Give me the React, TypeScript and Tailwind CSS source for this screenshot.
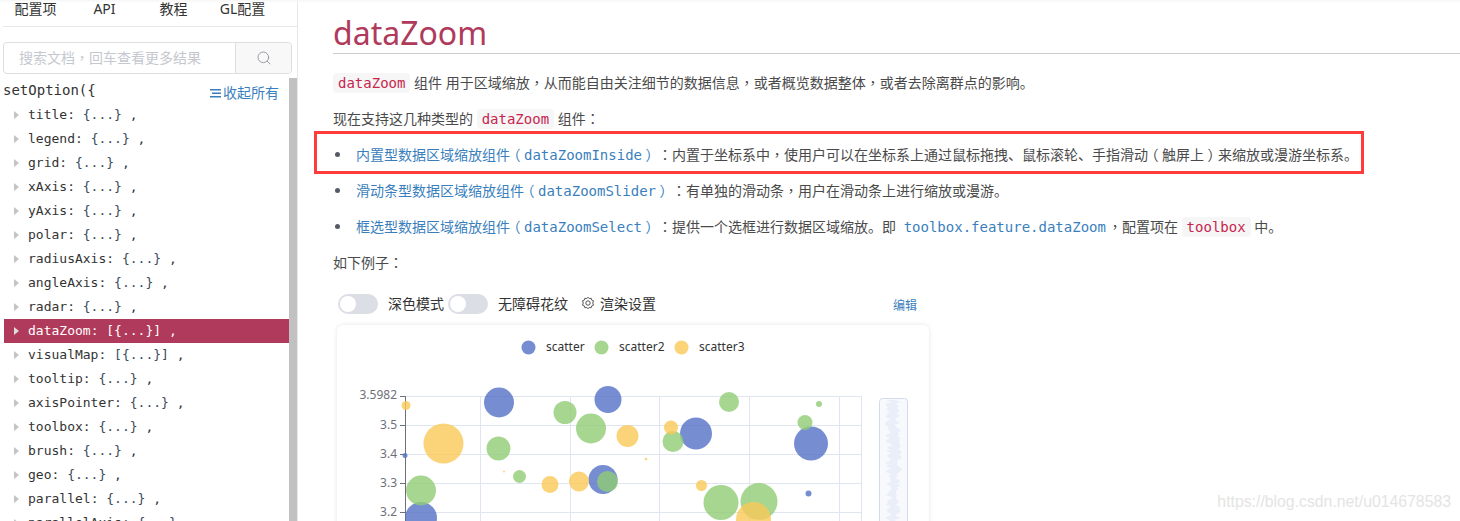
import React from "react";
import { Search } from "lucide-react";

const cjk = "font-['Noto_Sans','Noto_Sans_CJK_SC',sans-serif]";
const mono = "font-['DejaVu_Sans_Mono','Noto_Sans_CJK_SC',monospace]";

const rows: [string, string][] = [
  ["title", "{...}"],
  ["legend", "{...}"],
  ["grid", "{...}"],
  ["xAxis", "{...}"],
  ["yAxis", "{...}"],
  ["polar", "{...}"],
  ["radiusAxis", "{...}"],
  ["angleAxis", "{...}"],
  ["radar", "{...}"],
  ["dataZoom", "[{...}]"],
  ["visualMap", "[{...}]"],
  ["tooltip", "{...}"],
  ["axisPointer", "{...}"],
  ["toolbox", "{...}"],
  ["brush", "{...}"],
  ["geo", "{...}"],
  ["parallel", "{...}"],
  ["parallelAxis", "{...}"],
];

// Full-width punctuation sits centred in its box in the reference.
function Zh({ t }: { t: string }) {
  return (
    <>
      {t.split(/([，：（）])/).map((s, i) => {
        if (s === "，" || s === "：")
          return <span key={i} className="font-['Noto_Sans_CJK_TC']">{s}</span>;
        if (s === "（" || s === "）")
          return <span key={i} className="px-[3.5px] [font-feature-settings:'halt']">{s}</span>;
        return <React.Fragment key={i}>{s}</React.Fragment>;
      })}
    </>
  );
}

function Code({ children }: { children: React.ReactNode }) {
  return (
    <code className={`${mono} rounded-[4px] bg-[#f6f6f6] px-[5px] py-[2px] text-[14px] text-[#c7254e]`}>{children}</code>
  );
}

function M({ children }: { children: React.ReactNode }) {
  return <span className={`${mono} text-[14px]`}>{children}</span>;
}

function Item({ children }: { children: React.ReactNode }) {
  return (
    <li className="relative flex h-[36px] items-center pl-[23px]">
      <span className="absolute left-[2px] top-[15px] size-[5px] rounded-full bg-[#555b66]" />
      <span>{children}</span>
    </li>
  );
}

function Switch() {
  return (
    <span className="flex h-[20px] w-[40px] items-center rounded-full bg-[#dcdee6] pl-[2px]">
      <span className="size-[16px] rounded-full bg-white" />
    </span>
  );
}

type C = [number, number, number];
const blue: C[] = [[499, 402.5, 15], [608, 399.5, 13.5], [696, 433.5, 16], [811, 443.5, 17], [603, 479.5, 14.5], [421, 518, 16], [405, 455.5, 2.5], [808.5, 493.5, 3]];
const green: C[] = [[565, 412.5, 11.5], [591, 428.5, 15], [498.5, 448.5, 12], [673, 441.5, 10.5], [729, 402, 10], [805, 422.5, 7.5], [819, 404, 3], [519.5, 476.5, 6.5], [607.5, 481.5, 10.5], [421, 490.5, 15], [721, 502.5, 17.5], [759, 501.5, 18.5]];
const yellow: C[] = [[406, 405.5, 4.5], [443.5, 443.5, 20], [627.5, 436, 11], [671, 427.5, 7], [550, 484.5, 8.5], [579, 481.5, 10], [701.5, 485.5, 5.5], [753.5, 519.5, 17.5], [646, 459, 1.3], [504, 471.5, 1]];

const sliderPath = (() => {
  const right: string[] = [];
  const left: string[] = [];
  const n = (i: number) => Math.abs(Math.sin(i * 12.9898) * 43758.5453) % 1;
  for (let i = 0; i <= 66; i++) {
    const y = 400 + i * 1.9;
    right.push(`${(893 + 2 + n(i) * 7).toFixed(1)},${y.toFixed(1)}`);
    left.unshift(`${(893 - 1 - n(i + 100) * 7).toFixed(1)},${y.toFixed(1)}`);
  }
  return "M" + right.concat(left).join(" L") + " Z";
})();

function Chart() {
  const xs = [480.5, 570.5, 659.5, 749.5, 839.5, 861.5];
  const ys: [number, string][] = [[396.5, "3.5982"], [425.5, "3.5"], [454.5, "3.4"], [483.5, "3.3"], [512.5, "3.2"]];
  const labelFont = "'Noto Sans','Liberation Sans',sans-serif";
  return (
    <svg width="592" height="196" viewBox="337 325 592 196" className="block" fontFamily={labelFont}>
      {xs.map((x) => (
        <line key={x} x1={x} x2={x} y1={396} y2={521} stroke="#e0e6f1" />
      ))}
      {ys.map(([y]) => (
        <line key={y} x1={405} x2={862} y1={y} y2={y} stroke="#e0e6f1" />
      ))}
      <line x1={405.5} x2={405.5} y1={396} y2={521} stroke="#6e7079" />
      {ys.map(([y, t], i) => (
        <g key={t}>
          <line x1={400} x2={405} y1={y} y2={y} stroke="#6e7079" />
          <text x={397} y={y + (i === 0 ? 2 : 3)} textAnchor="end" fontSize="12" fill="#6e7079">{t}</text>
        </g>
      ))}
      {blue.map(([x, y, r], i) => <circle key={i} cx={x} cy={y} r={r} fill="#5470c6" fillOpacity={0.8} />)}
      {green.map(([x, y, r], i) => <circle key={i} cx={x} cy={y} r={r} fill="#91cc75" fillOpacity={0.8} />)}
      {yellow.map(([x, y, r], i) => <circle key={i} cx={x} cy={y} r={r} fill="#fac858" fillOpacity={0.8} />)}
      <circle cx={528.5} cy={347.5} r={7} fill="#5470c6" fillOpacity={0.8} />
      <text x={546} y={351} fontSize="12" fill="#333">scatter</text>
      <circle cx={601.5} cy={347.5} r={7} fill="#91cc75" fillOpacity={0.8} />
      <text x={619} y={351} fontSize="12" fill="#333">scatter2</text>
      <circle cx={681.5} cy={347.5} r={7} fill="#fac858" fillOpacity={0.8} />
      <text x={699} y={351} fontSize="12" fill="#333">scatter3</text>
      <rect x={879.5} y={398.5} width={28} height={130} rx={3} fill="#f7f9fc" stroke="#d2dbee" />
      <path d={sliderPath} fill="#e9eef9" />
    </svg>
  );
}

export default function App() {
  return (
    <div className={`${cjk} relative flex h-[521px] w-[1460px] overflow-hidden bg-white text-[14px] text-[#4a4a4a] [text-spacing-trim:space-all]`}>
      <aside className="flex h-full w-[298px] shrink-0 flex-col border-r border-[#e8e8e8]">
        <nav className="ml-[3px] flex h-[27px] shrink-0 border-b border-[#e8e8e8] text-[14px] leading-[18px] text-[#333]">
          <span className="ml-[-2px] w-[69px] text-center">配置项</span>
          <span className="w-[69px] text-center">API</span>
          <span className="w-[69px] text-center">教程</span>
          <span className="w-[69px] text-center">GL配置</span>
        </nav>
        <div className="ml-[3px] mr-[5px] mt-[15px] flex h-[32px] shrink-0 rounded-[4px] border border-[#dcdee2]">
          <div className="flex flex-1 items-center pb-[2px] pl-[15px] text-[#c5c8ce]"><span><Zh t="搜索文档，回车查看更多结果" /></span></div>
          <div className="flex w-[56px] items-center justify-center rounded-r-[4px] border-l border-[#dcdee2] bg-[#f8f8f9]">
            <Search size={16} color="#9a9da5" strokeWidth={1.5} />
          </div>
        </div>
        <div className="mt-[4px] flex min-h-0 flex-1">
          <div className="min-w-0 flex-1 overflow-hidden">
            <div className="flex h-[25px] items-start justify-between pl-[3px] pr-[10px] pt-[4px]">
              <span className={`${mono} text-[14px] leading-[17px] text-[#333]`}>{"setOption({"}</span>
              <span className="mt-[3px] flex items-center gap-[2px] text-[14px] leading-[16px] text-[#3a7fbd]">
                <svg width="11" height="9" viewBox="0 0 11 9" fill="#3a7fbd">
                  <rect x="0" y="0" width="11" height="1.5" />
                  <rect x="2" y="3.5" width="9" height="1.5" />
                  <rect x="0" y="7" width="11" height="1.5" />
                </svg>
                收起所有
              </span>
            </div>
            <ul className={`${mono} ml-[4px] text-[13px]`}>
              {rows.map(([k, v]) => {
                const on = k === "dataZoom";
                return (
                  <li key={k} className={`flex h-[24px] items-center pl-[10px] ${on ? "bg-[#b03a5b] text-white" : "text-[#333]"}`}>
                    <svg width="14" height="8" viewBox="0 0 14 8" className="shrink-0">
                      <path d="M0 0 L5 4 L0 8 Z" fill={on ? "#ddd" : "#c4c4c4"} />
                    </svg>
                    <span className="whitespace-pre">
                      {k}: <span className={on ? "" : "text-[#3a4a5a]"}>{v}</span> ,
                    </span>
                  </li>
                );
              })}
            </ul>
          </div>
          <div className="w-[8px] shrink-0 bg-[#c1c1c1]" />
        </div>
      </aside>

      <main className="min-w-0 flex-1 pl-[35px]">
        <h2 className="h-[54px] border-b border-[#cccccc] pt-[11px] font-['Noto_Sans'] text-[32px] leading-[44px] text-[#b03a5b]">dataZoom</h2>
        <p className="mt-[11px] flex h-[36px] items-center">
          <span><Code>dataZoom</Code> <Zh t="组件 用于区域缩放，从而能自由关注细节的数据信息，或者概览数据整体，或者去除离群点的影响。" /></span>
        </p>
        <p className="flex h-[36px] items-center">
          <span>现在支持这几种类型的 <Code>dataZoom</Code> <Zh t="组件：" /></span>
        </p>
        <ul>
          <Item>
            <span className="mr-[2px] text-[#3a7fbd]"><Zh t="内置型数据区域缩放组件（" /><M>dataZoomInside</M><Zh t="）" /></span><Zh t="：内置于坐标系中，使用户可以在坐标系上通过鼠标拖拽、鼠标滚轮、手指滑动（触屏上）来缩放或漫游坐标系。" />
            <span className="absolute left-[-19px] top-[-6px] h-[43px] w-[1050px] border-[3px] border-[#ff3b3b]" />
          </Item>
          <Item>
            <span className="mr-[2px] text-[#3a7fbd]"><Zh t="滑动条型数据区域缩放组件（" /><M>dataZoomSlider</M><Zh t="）" /></span><Zh t="：有单独的滑动条，用户在滑动条上进行缩放或漫游。" />
          </Item>
          <Item>
            <span className="mr-[2px] text-[#3a7fbd]"><Zh t="框选型数据区域缩放组件（" /><M>dataZoomSelect</M><Zh t="）" /></span><Zh t="：提供一个选框进行数据区域缩放。即 " /><span className="pl-[4px] pr-[2px] text-[#3a7fbd]"><M>toolbox.feature.dataZoom</M></span><Zh t="，配置项在 " /><Code>toolbox</Code> 中。
          </Item>
        </ul>
        <p className="-mt-[1px] flex h-[36px] items-center"><span><Zh t="如下例子：" /></span></p>
        <div className="ml-[5px] mt-[13px] flex h-[22px] w-[579px] items-center text-[#333]">
          <Switch />
          <span className="-mt-[2px] ml-[10px] w-[60px]">深色模式</span>
          <Switch />
          <span className="-mt-[2px] ml-[10px]">无障碍花纹</span>
          <svg width="14" height="14" viewBox="0 0 14 14" fill="none" stroke="#555" strokeWidth="1" className="-mt-[2px] ml-[13px]">
            <circle cx="7" cy="7" r="2.2" />
            <path d="M7 1.2 L8.2 2.6 L10.1 2.2 L10.6 4 L12.4 4.7 L11.8 7 L12.4 9.3 L10.6 10 L10.1 11.8 L8.2 11.4 L7 12.8 L5.8 11.4 L3.9 11.8 L3.4 10 L1.6 9.3 L2.2 7 L1.6 4.7 L3.4 4 L3.9 2.2 L5.8 2.6 Z" />
          </svg>
          <span className="-mt-[2px] ml-[5px]">渲染设置</span>
          <span className="ml-auto mt-[4px] text-[12px] text-[#3a7fbd]">编辑</span>
        </div>
        <div className="ml-[4px] mt-[10px] h-[300px] w-[592px] rounded-t-[6px] shadow-[0_0_5px_rgba(0,0,0,0.1)]">
          <Chart />
        </div>
      </main>

      <div className="absolute left-0 top-0 h-[3px] w-full bg-gradient-to-b from-[#f6f6f6] to-transparent" />
      <span className="absolute right-[9px] top-[493px] font-['Liberation_Sans'] text-[15.8px] leading-[18px] text-[#e4e4e4]">https://blog.csdn.net/u014678583</span>
    </div>
  );
}
